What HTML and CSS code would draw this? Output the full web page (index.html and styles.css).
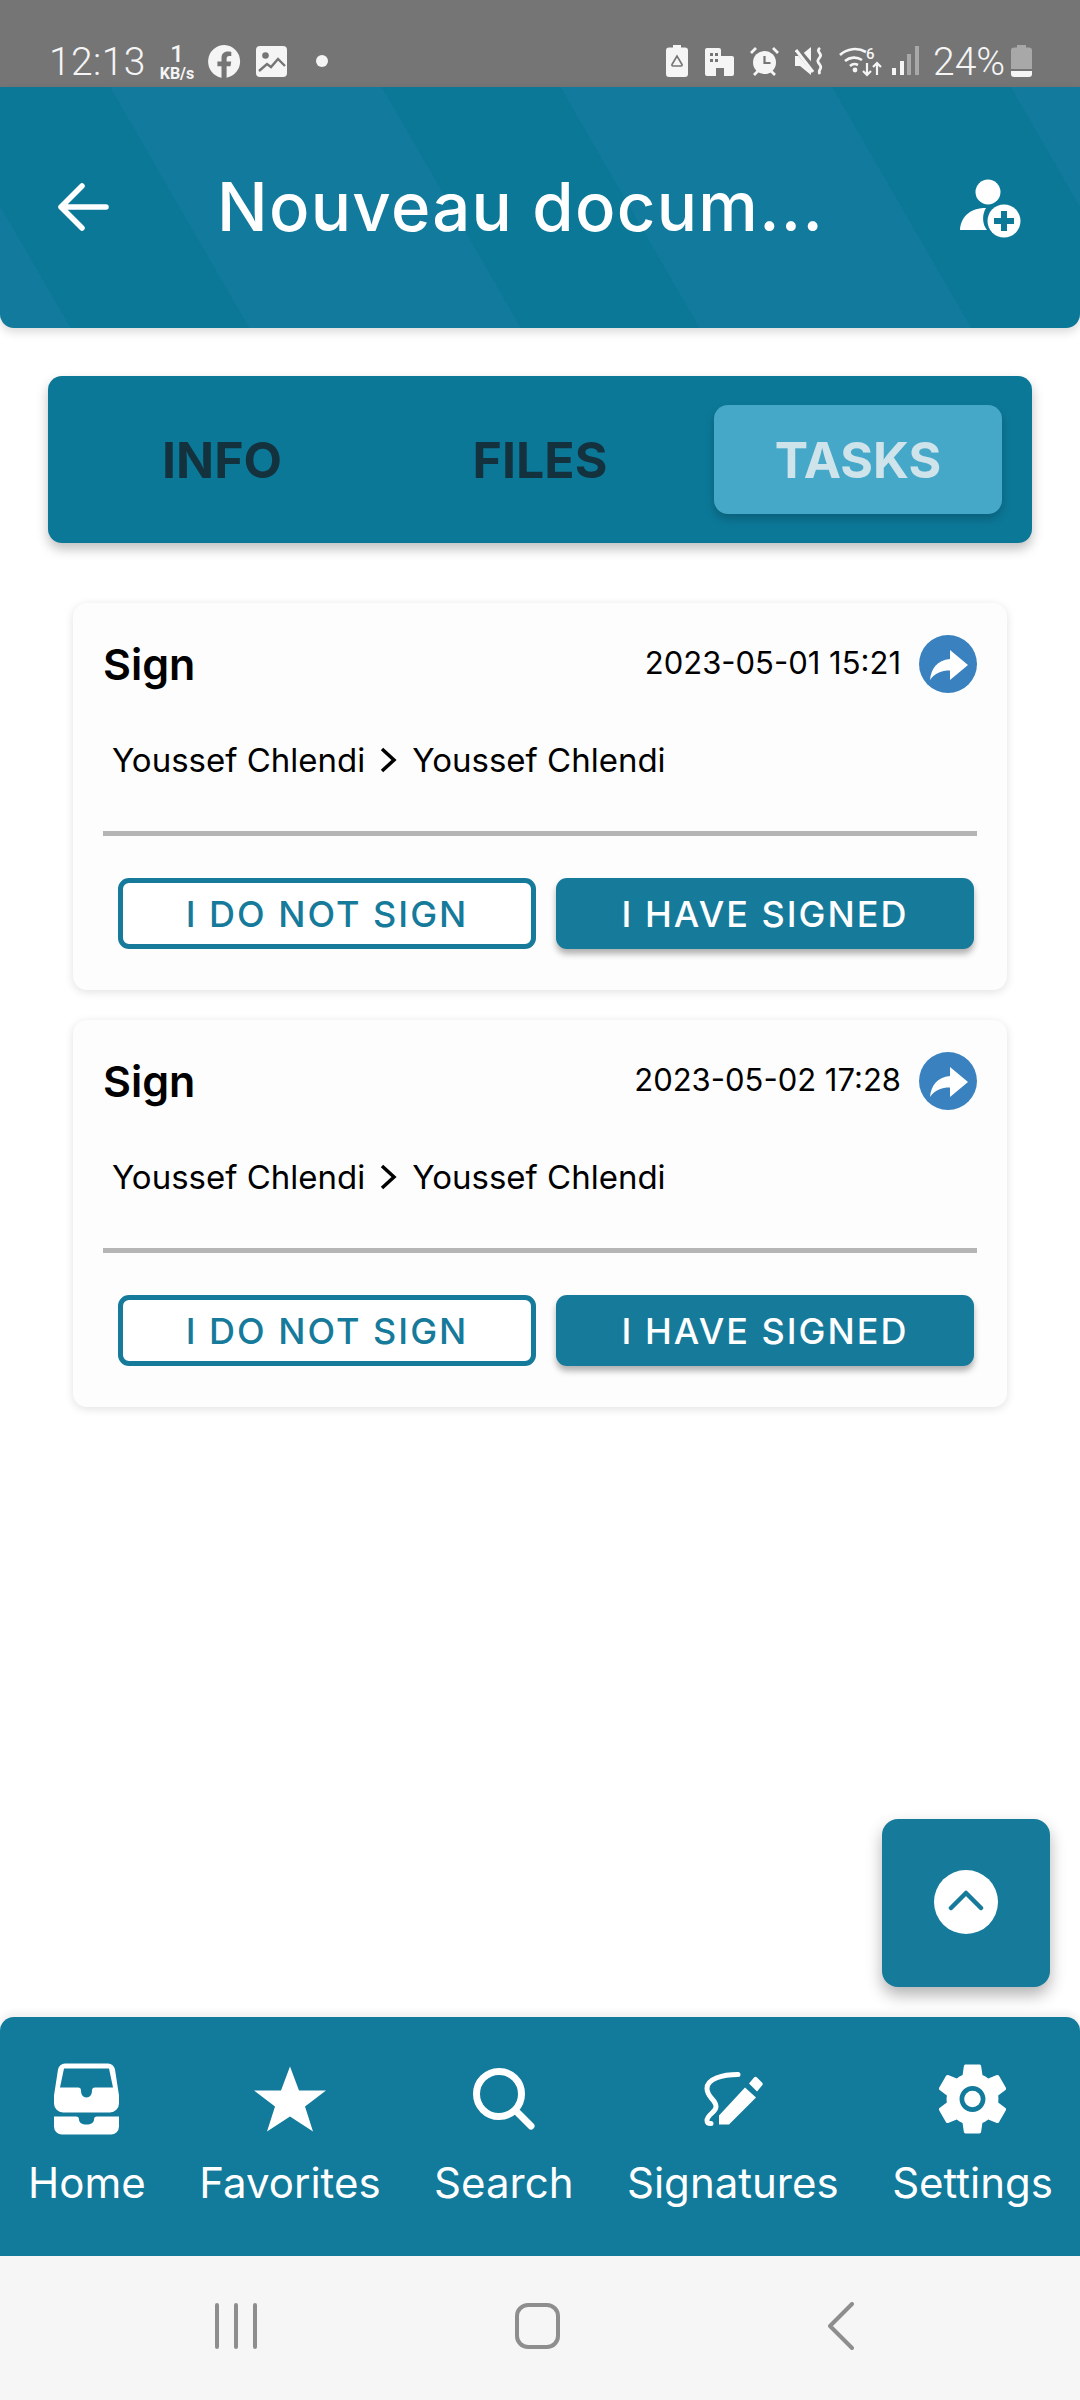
FILE: index.html
```html
<!DOCTYPE html>
<html>
	<head>
		<meta charset="utf-8">
		<title>Nouveau document</title>
		<link rel="stylesheet" href="styles.css">
	</head>
	<body>
		<div class="status">
			<div class="status-left">
				<span class="time">12:13</span>
				<span class="speed"><b>1</b><i>KB/s</i></span>
				<svg class="ic-fb" viewBox="0 0 33 33"><path fill="#f5f5f5" d="M16.5 0a16.5 16.5 0 0 0-3 32.7V21.2H9.4v-4.7h4.1V13c0-4.100 2.400-6.400 6.200-6.400 1.800 0 3.600.3 3.600.3v4h-2c-2 0-2.700 1.300-2.700 2.600v3h4.600l-.7 4.700h-3.900v11.500A16.500 16.500 0 0 0 16.500 0z"/></svg>
				<svg class="ic-img" viewBox="0 0 31 31"><rect width="31" height="31" rx="4" fill="#f5f5f5"/><circle cx="9.500" cy="9.500" r="3.300" fill="#757575"/><path fill="none" stroke="#757575" stroke-width="2.400" d="M3 25l8-7 4 3 7-8 7 7"/></svg>
				<span class="dot"></span>
			</div>
			<div class="status-right">
				<svg class="ic-s22" viewBox="0 0 22 32"><path fill="#f5f5f5" d="M7 0h8v2.500h4a3 3 0 0 1 3 3V29a3 3 0 0 1-3 3H3a3 3 0 0 1-3-3V5.500a3 3 0 0 1 3-3h4z"/><path fill="none" stroke="#757575" stroke-width="1.600" d="M11 11l-5 8.500a1 1 0 0 0 1 1.500h8a1 1 0 0 0 1-1.500z"/></svg>
				<svg class="ic-b" viewBox="0 0 29 28"><path fill="#f5f5f5" d="M2 0h12a2 2 0 0 1 2 2v6h11a2 2 0 0 1 2 2v16a2 2 0 0 1-2 2h-8v-8h-8v8H2a2 2 0 0 1-2-2V2a2 2 0 0 1 2-2z"/><path fill="#757575" d="M5 5h3v3H5zM10 5h3v3h-3zM5 11h3v3H5zM10 11h3v3h-3z"/></svg>
				<svg class="ic-a" viewBox="0 0 29 29"><circle cx="14.500" cy="15.500" r="11.500" fill="#f5f5f5"/><path fill="none" stroke="#f5f5f5" stroke-width="2.800" d="M1 6l5-5M28 6l-5-5M4 28l4-4M25 28l-4-4"/><path fill="none" stroke="#757575" stroke-width="2.200" d="M14.500 9v7h6"/></svg>
				<svg class="ic-m" viewBox="0 0 29 28"><path fill="#f5f5f5" d="M0 9h5L16 0v28L5 19H0z"/><path stroke="#757575" stroke-width="6" d="M0 0l20 24"/><path stroke="#f5f5f5" stroke-width="3" d="M1 3l17 22"/><path fill="none" stroke="#f5f5f5" stroke-width="2.800" d="M25 1c-5 4 3 5 0 9s-3 4 0 8-3 5 0 9"/></svg>
				<svg class="ic-w" viewBox="0 0 43 31"><g fill="none" stroke="#f5f5f5" stroke-width="2.600"><path d="M1 9a22 22 0 0 1 26-3M6 15a14 14 0 0 1 17-1M11 20a7 7 0 0 1 8-1"/></g><circle cx="16" cy="24" r="2.400" fill="#f5f5f5"/><text class="ic-w-num" x="27" y="13">6</text><path fill="none" stroke="#f5f5f5" stroke-width="2.200" d="M28 17v12M24 25l4 4 4-4M38 29V17M34 21l4-4 4 4"/></svg>
				<svg class="ic-sig" viewBox="0 0 27 29"><rect x="0" y="22" width="4" height="7" fill="#f5f5f5"/><rect x="8" y="15" width="4" height="14" fill="#f5f5f5"/><rect x="15" y="8" width="4" height="21" fill="#a8a8a8"/><rect x="23" y="0" width="4" height="29" fill="#a8a8a8"/></svg>
				<span class="pct">24%</span>
				<svg class="ic-bat" viewBox="0 0 21 32"><path fill="#a8a8a8" d="M6 0h9v2.500h3a3 3 0 0 1 3 3V24H0V5.500a3 3 0 0 1 3-3h3z"/><path fill="#f5f5f5" d="M0 26h21v3a3 3 0 0 1-3 3H3a3 3 0 0 1-3-3z"/></svg>
			</div>
		</div>

		<header class="top">
			<svg class="back" viewBox="0 0 51 48"><path fill="none" stroke="#fff" stroke-width="5.500" stroke-linecap="round" stroke-linejoin="round" d="M24 3L3 24l21 21M3 24h45"/></svg>
			<h1 class="title">Nouveau docum...</h1>
			<svg class="add-user" viewBox="0 0 62 60"><circle cx="28" cy="13" r="12.500" fill="#fff"/><path fill="#fff" d="M0 51c1-15 12-22 26-22-4 6-4 16 1 22z"/><circle cx="44" cy="42" r="16.500" fill="#fff"/><path stroke="#0c7898" stroke-width="6" d="M44 32v20M34 42h20"/></svg>
		</header>

		<main class="content">
			<nav class="tabs">
				<span class="tab">INFO</span>
				<span class="tab">FILES</span>
				<span class="tab tab-on">TASKS</span>
			</nav>

			<section class="card">
				<div class="card-head">
					<span class="card-title">Sign</span>
					<span class="card-date">2023-05-01 15:21</span>
					<svg class="share" viewBox="0 0 58 58"><circle cx="29" cy="29" r="29" fill="#3a82bf"/><path fill="#fff" d="M31 15l18 15-18 15v-9.500c-9 0-15 2.500-20 9.500 1-11 7-20 20-21z"/></svg>
				</div>
				<div class="route">
					<span>Youssef Chlendi</span>
					<svg class="chev" viewBox="0 0 20 26"><path fill="none" stroke="#000" stroke-width="3.500" d="M3 2l12 11L3 24"/></svg>
					<span>Youssef Chlendi</span>
				</div>
				<div class="line"></div>
				<div class="btns">
					<span class="btn btn-out">I DO NOT SIGN</span>
					<span class="btn btn-full">I HAVE SIGNED</span>
				</div>
			</section>

			<section class="card">
				<div class="card-head">
					<span class="card-title">Sign</span>
					<span class="card-date">2023-05-02 17:28</span>
					<svg class="share" viewBox="0 0 58 58"><circle cx="29" cy="29" r="29" fill="#3a82bf"/><path fill="#fff" d="M31 15l18 15-18 15v-9.500c-9 0-15 2.500-20 9.500 1-11 7-20 20-21z"/></svg>
				</div>
				<div class="route">
					<span>Youssef Chlendi</span>
					<svg class="chev" viewBox="0 0 20 26"><path fill="none" stroke="#000" stroke-width="3.500" d="M3 2l12 11L3 24"/></svg>
					<span>Youssef Chlendi</span>
				</div>
				<div class="line"></div>
				<div class="btns">
					<span class="btn btn-out">I DO NOT SIGN</span>
					<span class="btn btn-full">I HAVE SIGNED</span>
				</div>
			</section>

			<div class="fab">
				<span class="fab-in">
					<svg viewBox="0 0 36 22"><path fill="none" stroke="#167a9b" stroke-width="4.500" stroke-linecap="round" stroke-linejoin="round" d="M3 19L18 4l15 15"/></svg>
				</span>
			</div>
		</main>

		<footer class="bar">
			<div class="bar-item">
				<svg class="ic-home" viewBox="0 0 65 71"><path fill="#fff" fill-rule="evenodd" d="M11 0h43a7 7 0 0 1 7 6l4 26v8a9 9 0 0 1-9 9H9a9 9 0 0 1-9-9v-8L4 6a7 7 0 0 1 7-6zM10 5l-4 19h18c2 0 3 1 3 3 0 4 2 7 5.500 7s5.500-3 5.500-7c0-2 1-3 3-3h18L55 5z"/><path fill="#fff" d="M0 53h22c2 0 3 1 3 3 0 3 3 5 7.500 5s7.500-2 7.500-5c0-2 1-3 3-3h22v10a8 8 0 0 1-8 8H8a8 8 0 0 1-8-8z"/></svg>
				<span>Home</span>
			</div>
			<div class="bar-item">
				<svg class="ic-star" viewBox="0 0 72 65"><path fill="#fff" d="M36 0l9 24h27L51 40l8 25-23-15-23 15 8-25L0 24h27z"/></svg>
				<span>Favorites</span>
			</div>
			<div class="bar-item">
				<svg class="ic-search" viewBox="0 0 62 62"><circle cx="26" cy="26" r="22.500" fill="none" stroke="#fff" stroke-width="7"/><path stroke="#fff" stroke-width="7" stroke-linecap="round" d="M43 43l15 15"/></svg>
				<span>Search</span>
			</div>
			<div class="bar-item">
				<svg class="ic-sign" viewBox="0 0 60 55"><path fill="none" stroke="#fff" stroke-width="5" stroke-linecap="round" d="M35 3C20 3 4 7 4 17c0 9 9 11 9 18 0 6-9 8-9 14 0 2 1 3 4 3"/><path fill="#fff" d="M16 53V44l26-28 11 10-27 27zM46 12l5-6c1-1 2-1 3 0l5 5c1 1 1 2 0 3l-5 6z"/></svg>
				<span>Signatures</span>
			</div>
			<div class="bar-item">
				<svg class="ic-gear" viewBox="3 2 18 20"><path fill="#fff" d="M19.140 12.940c.04-.3.06-.61.06-.94 0-.32-.02-.64-.07-.94l2.030-1.580c.18-.14.23-.41.12-.61l-1.920-3.320c-.12-.22-.37-.29-.59-.22l-2.390.96c-.5-.38-1.030-.7-1.620-.94l-.36-2.540c-.04-.24-.24-.41-.48-.41h-3.840c-.24 0-.43.17-.47.41l-.36 2.540c-.59.24-1.130.57-1.620.94l-2.390-.96c-.22-.08-.47 0-.59.22L2.740 8.870c-.12.21-.08.47.12.61l2.030 1.580c-.05.3-.09.63-.09.94s.02.64.07.94l-2.030 1.580c-.18.14-.23.41-.12.61l1.920 3.320c.12.22.37.29.59.22l2.390-.96c.5.38 1.030.7 1.620.94l.36 2.540c.05.24.24.41.48.41h3.840c.24 0 .44-.17.47-.41l.36-2.540c.59-.24 1.130-.56 1.620-.94l2.390.96c.22.08.47 0 .59-.22l1.920-3.320c.12-.22.07-.47-.12-.61l-2.010-1.580zM12 15.600c-1.980 0-3.600-1.620-3.600-3.600s1.620-3.600 3.600-3.600 3.600 1.620 3.600 3.600-1.620 3.600-3.600 3.600z"/><circle cx="12" cy="12" r="2.300" fill="#fff"/></svg>
				<span>Settings</span>
			</div>
		</footer>

		<div class="sysnav">
			<svg class="sys-recent" viewBox="0 0 42 46"><path stroke="#8e8e8e" stroke-width="4" stroke-linecap="round" d="M2 2v42M21 2v42M40 2v42"/></svg>
			<svg class="sys-home" viewBox="0 0 45 46"><rect x="2" y="2" width="41" height="42" rx="11" fill="none" stroke="#8e8e8e" stroke-width="4"/></svg>
			<svg class="sys-back" viewBox="0 0 26 48"><path fill="none" stroke="#8e8e8e" stroke-width="4" stroke-linecap="round" stroke-linejoin="round" d="M24 2L2 24l22 22"/></svg>
		</div>
	</body>
</html>
```

FILE: styles.css
```css
*{margin: 0; padding: 0; box-sizing: border-box;}
body{width: 1080px; height: 2400px; display: flex; flex-direction: column; background: #fff; font-family: Inter, "Noto Sans", sans-serif; overflow: hidden;}
svg{display: block; flex: none;}

.status{height: 87px; background: #757575; display: flex; justify-content: space-between; padding: 45px 48px 0 49px; color: #f5f5f5; font-family: Roboto, sans-serif;}
.status-left,.status-right{display: flex; align-items: flex-start;}
.time{font-size: 39px; font-weight: 300; line-height: 34px; width: 95px; letter-spacing: 0.4px;}
.speed{width: 38px; margin-left: 14px; display: flex; flex-direction: column; align-items: center; margin-top: -3px;}
.speed b{font-size: 24px; font-weight: 500; line-height: 24px;}
.speed i{font-size: 16px; font-style: normal; font-weight: 700; line-height: 15px;}
.ic-fb{width: 33px; height: 33px; margin-left: 12px;}
.ic-img{width: 31px; height: 31px; margin-left: 15px; margin-top: 1px;}
.dot{width: 12px; height: 12px; border-radius: 50%; background: #f5f5f5; margin: 10px 0 0 29px;}
.ic-s22{width: 22px; height: 32px;}
.ic-b{width: 29px; height: 28px; margin: 3px 0 0 17px;}
.ic-a{width: 29px; height: 29px; margin: 2px 0 0 16px;}
.ic-m{width: 29px; height: 28px; margin: 2px 0 0 16px;}
.ic-w{width: 43px; height: 31px; margin: 1px 0 0 15px;}
.ic-w-num{font-size: 15px; font-weight: 500; fill: #f5f5f5;}
.ic-sig{width: 27px; height: 29px; margin: 1px 0 0 10px;}
.pct{font-size: 39px; font-weight: 300; line-height: 34px; width: 78px; margin-left: 14px;}
.ic-bat{width: 21px; height: 32px;}

.top{height: 241px; flex: none; display: flex; align-items: center; padding: 0 58px 0 58px; border-radius: 0 0 14px 14px; background-color: #0c7898; background-image: repeating-linear-gradient(60deg, #127a9c 0, #127a9c 61px, #0c7898 61px, #0c7898 216px, #127a9c 216px, #127a9c 390px); box-shadow: 0 4px 10px rgba(0,0,0,0.15); position: relative;}
.back{width: 51px; height: 48px; margin-top: -2px;}
.title{font-size: 67px; font-weight: 500; color: #fff; margin: -3px 0 0 108px; flex: 1; white-space: nowrap; letter-spacing: 1.3px;}
.add-user{width: 62px; height: 60px; margin-top: 3px;}

.content{flex: 1; position: relative; padding: 48px 48px 0;}
.tabs{height: 167px; background: #0c7898; border-radius: 14px; display: grid; grid-template-columns: repeat(3, 1fr); gap: 30px; padding: 29px 30px; box-shadow: 0 6px 12px rgba(0,0,0,0.25);}
.tab{display: flex; align-items: center; justify-content: center; font-size: 50px; font-weight: 700; color: #14323e; border-radius: 14px;}
.tab-on{background: #46a8c8; color: #cfe3ea; box-shadow: 0 5px 10px rgba(0,0,0,0.2);}

.card{width: 934px; height: 387px; margin: 60px 0 0 25px; padding: 30px 30px 0; background: #fdfdfd; border-radius: 14px; box-shadow: 0 2px 10px rgba(0,0,0,0.12);}
.card + .card{margin-top: 30px;}
.card-head{display: flex; align-items: center; height: 62px;}
.card-title{font-size: 43px; font-weight: 600; color: #000; flex: 1;}
.card-date{font-size: 31px; color: #000; margin-right: 18px; margin-top: -4px;}
.share{width: 58px; height: 58px;}
.route{display: flex; align-items: center; margin: 40px 0 0 9px; height: 50px; font-size: 33px; color: #000;}
.chev{width: 20px; height: 26px; margin: 0 13px 0 14px;}
.line{height: 5px; background: #b5b5b5; margin-top: 46px;}
.btns{display: flex; gap: 20px; padding: 0 3px 0 15px; margin-top: 42px;}
.btn{flex: 1 1 418px; height: 71px; display: flex; align-items: center; justify-content: center; font-size: 36px; font-weight: 500; letter-spacing: 2px; border-radius: 11px;}
.btn-out{border: 5px solid #167a9b; color: #167a9b; background: #fff;}
.btn-full{background: #167a9b; color: #fff; box-shadow: 0 5px 6px rgba(0,0,0,0.3);}

.fab{position: absolute; left: 882px; top: 1491px; width: 168px; height: 168px; border-radius: 16px; background: #167a9b; display: flex; align-items: center; justify-content: center; box-shadow: 0 8px 16px rgba(0,0,0,0.3);}
.fab-in{width: 64px; height: 64px; border-radius: 50%; background: #fff; display: flex; align-items: center; justify-content: center; margin-top: -2px;}
.fab-in svg{width: 36px; height: 22px; margin-top: -5px;}

.bar{height: 239px; flex: none; background: #127a9b; border-radius: 14px 14px 0 0; display: flex; justify-content: space-between; padding: 46px 27px 0 28px; box-shadow: 0 -5px 6px rgba(0,0,0,0.06); position: relative;}
.bar-item{display: flex; flex-direction: column; align-items: center; color: #fff; font-size: 42px; font-weight: 400;}
.bar-item svg{height: 72px;}
.bar-item span{margin-top: 23px; line-height: 50px;}
.ic-home{width: 65px;}
.ic-star{width: 72px;}
.ic-search{width: 62px;}
.ic-sign{width: 60px;}
.ic-gear{width: 67px;}

.sysnav{height: 144px; flex: none; background: #f6f6f6; display: flex; align-items: center; justify-content: flex-start; padding: 0 0 4px 215px;}
.sys-recent{width: 42px; height: 46px;}
.sys-home{width: 45px; height: 46px; margin-left: 258px;}
.sys-back{width: 26px; height: 48px; margin-left: 268px;}
```
